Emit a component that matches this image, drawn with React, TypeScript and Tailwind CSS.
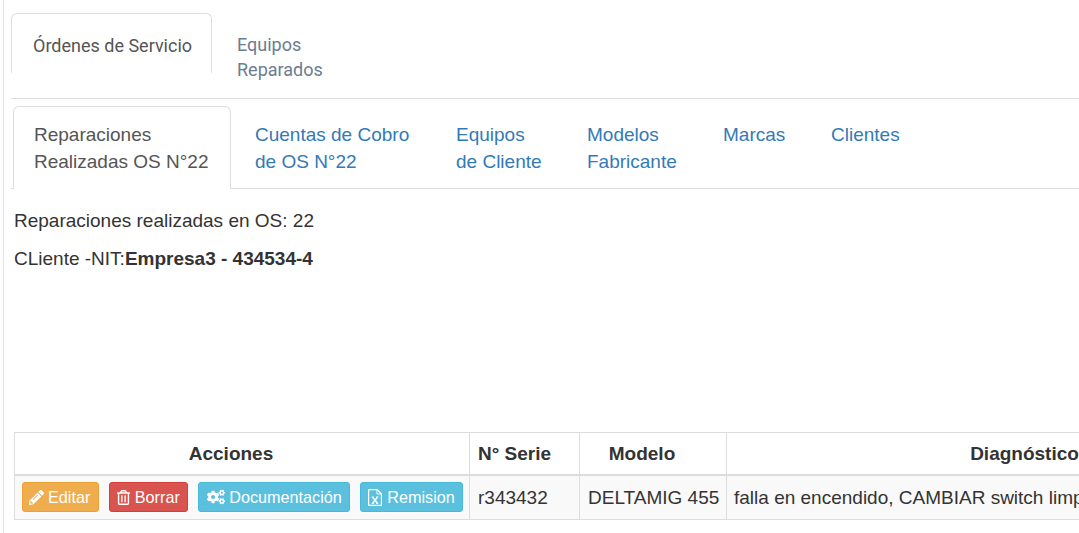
import { FaPencilAlt, FaRegTrashAlt, FaCogs } from 'react-icons/fa'
import type { ReactNode } from 'react'

const SUB_TABS = [
  { lines: ['Cuentas de Cobro', 'de OS N°22'], width: 'w-[201px]' },
  { lines: ['Equipos', 'de Cliente'], width: 'w-[131px]' },
  { lines: ['Modelos', 'Fabricante'], width: 'w-[136px]' },
  { lines: ['Marcas'], width: 'w-[108px]' },
  { lines: ['Clientes'], width: 'w-[110px]' },
]

function ActionButton({ color, icon, label }: { color: string; icon: ReactNode; label: string }) {
  return (
    <button className={`flex h-[30px] items-center rounded-[3px] border pr-[7.5px] text-[16.2px] text-white ${color}`}>
      {icon}
      {label}
    </button>
  )
}

// file-excel outline, react-icons only has the FA5 version with a much thinner shape
function FileExcelIcon() {
  return (
    <svg viewBox="0 0 14 17" className="h-[17px] w-[14px]" fill="none" stroke="currentColor">
      <path d="M.6.6h8.6l4.2 4.2v11.6H.6z" strokeWidth="1.2" />
      <path d="M9 .8v4.2h4.2" strokeWidth="1" />
      <path d="M4.6 8.2l4.8 6M9.4 8.2l-4.8 6" strokeWidth="1.5" />
      <path d="M3.6 8h2.4M8 8h2.4M3.6 14.4h2.4M8 14.4h2.4" strokeWidth=".9" />
    </svg>
  )
}

export default function App() {
  return (
    <div className="h-[533px] w-[1079px] overflow-hidden bg-white font-['Liberation_Sans',sans-serif] text-[#333]">
      <div className="ml-[3px] h-full border-l border-[#e7e7e7] pl-[7px]">
        {/* top tabs */}
        <div className="flex h-[99px] items-start border-b border-[#ddd] pt-[13px] font-['Roboto',sans-serif] text-[18px] leading-[25px]">
          <div className="h-[60px] w-[201px] rounded-t-[6px] border-x border-t border-[#ddd] pl-[21px] pt-[19px] text-[#555]">
            Órdenes de Servicio
          </div>
          <div className="pl-[25px] pt-[19px] text-[#6b7c93]">
            Equipos
            <br />
            Reparados
          </div>
        </div>

        {/* second tabs */}
        <div className="mt-[7px] flex h-[83px] border-b border-[#ddd] pl-[2px] text-[19px] leading-[27px]">
          <div className="-mb-px h-[83px] w-[218px] rounded-t-[6px] border-x border-t border-[#ddd] bg-white pl-[20px] pt-[14px] text-[#555]">
            Reparaciones
            <br />
            Realizadas OS N°22
          </div>
          <div className="flex pl-[24px] pt-[15px] text-[#337ab7]">
            {SUB_TABS.map((tab) => (
              <div key={tab.lines[0]} className={tab.width}>
                {tab.lines.map((line) => (
                  <div key={line}>{line}</div>
                ))}
              </div>
            ))}
          </div>
        </div>

        <p className="ml-[3px] mt-[19px] text-[19px] leading-[25px]">Reparaciones realizadas en OS: 22</p>
        <p className="ml-[3px] mt-[13px] text-[19px] leading-[25px]">
          CLiente -NIT:<b>Empresa3 - 434534-4</b>
        </p>

        {/* table */}
        <table className="ml-[3px] mt-[161px] w-[1330px] table-fixed border-collapse text-[19px] leading-[25px]">
          <colgroup>
            <col className="w-[455px]" />
            <col className="w-[110px]" />
            <col className="w-[147px]" />
            <col className="w-[618px]" />
          </colgroup>
          <thead>
            <tr>
              <th className="h-[42px] border border-b-2 border-[#ddd] pl-2 pr-[30px] text-center">Acciones</th>
              <th className="whitespace-nowrap border border-b-2 border-[#ddd] pl-2 text-left">N° Serie</th>
              <th className="border border-b-2 border-[#ddd] pl-2 pr-[30px] text-center">Modelo</th>
              <th className="border border-b-2 border-[#ddd] pl-2 pr-[30px] text-center">Diagnóstico</th>
            </tr>
          </thead>
          <tbody>
            <tr className="bg-[#f9f9f9]">
              <td className="h-[45px] border border-[#ddd] px-[7px]">
                <div className="flex gap-[10px]">
                  <ActionButton color="border-[#eea236] bg-[#f0ad4e] pl-[6px]" icon={<FaPencilAlt className="mr-[4px] size-[15px]" />} label="Editar" />
                  <ActionButton color="border-[#d43f3a] bg-[#d9534f] pl-[6px]" icon={<FaRegTrashAlt className="mr-[4px] size-[15px]" />} label="Borrar" />
                  <ActionButton color="border-[#46b8da] bg-[#5bc0de] pl-[8px]" icon={<FaCogs className="mr-[4px] size-[18px]" />} label="Documentación" />
                  <ActionButton color="border-[#46b8da] bg-[#5bc0de] pl-[7px]" icon={<span className="mr-[5px]"><FileExcelIcon /></span>} label="Remision" />
                </div>
              </td>
              <td className="border border-[#ddd] px-2">r343432</td>
              <td className="whitespace-nowrap border border-[#ddd] px-2">DELTAMIG 455</td>
              <td className="whitespace-nowrap border border-[#ddd] px-[7px]">falla en encendido, CAMBIAR switch limpieza</td>
            </tr>
          </tbody>
        </table>
      </div>
    </div>
  )
}
